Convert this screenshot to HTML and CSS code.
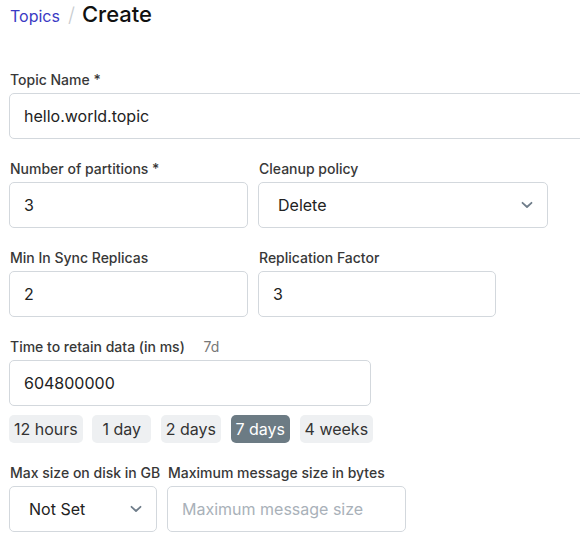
FILE: index.html
```
<!DOCTYPE html>
<html>
<head>
<meta charset="utf-8">
<link rel="stylesheet" href="styles.css">
</head>
<body>
<div class="page">
  <nav class="crumbs">
    <a class="crumb-link" href="#">Topics</a>
    <span class="crumb-sep">/</span>
    <h1 class="crumb-title">Create</h1>
  </nav>
  <form class="form">
    <div class="field">
      <label class="label">Topic Name *</label>
      <input class="input input-wide" type="text" value="hello.world.topic">
    </div>
    <div class="row">
      <div class="field">
        <label class="label">Number of partitions *</label>
        <input class="input w239" type="text" value="3">
      </div>
      <div class="field">
        <label class="label">Cleanup policy</label>
        <div class="select w290">
          <span>Delete</span>
          <svg class="chev" width="12" height="8" viewBox="0 0 12 8"><path d="M1.5 1.8 L6 6 L10.5 1.8" fill="none" stroke="#6f7d8a" stroke-width="1.8" stroke-linecap="round" stroke-linejoin="round"/></svg>
        </div>
      </div>
    </div>
    <div class="row">
      <div class="field">
        <label class="label">Min In Sync Replicas</label>
        <input class="input w239" type="text" value="2">
      </div>
      <div class="field">
        <label class="label">Replication Factor</label>
        <input class="input w238" type="text" value="3">
      </div>
    </div>
    <div class="field">
      <label class="label">Time to retain data (in ms) <span class="hint">7d</span></label>
      <input class="input w362" type="text" value="604800000">
      <div class="presets">
        <button type="button" class="preset">12 hours</button>
        <button type="button" class="preset">1 day</button>
        <button type="button" class="preset">2 days</button>
        <button type="button" class="preset active">7 days</button>
        <button type="button" class="preset">4 weeks</button>
      </div>
    </div>
    <div class="row">
      <div class="field fixed w148">
        <label class="label">Max size on disk in GB</label>
        <div class="select w148">
          <span>Not Set</span>
          <svg class="chev" width="12" height="8" viewBox="0 0 12 8"><path d="M1.5 1.8 L6 6 L10.5 1.8" fill="none" stroke="#6f7d8a" stroke-width="1.8" stroke-linecap="round" stroke-linejoin="round"/></svg>
        </div>
      </div>
      <div class="field">
        <label class="label">Maximum message size in bytes</label>
        <input class="input w239" type="text" placeholder="Maximum message size">
      </div>
    </div>
  </form>
</div>
</body>
</html>
```
FILE: styles.css
```
html, body {
  margin: 0;
  padding: 0;
  background: #fff;
  overflow: hidden;
}
body {
  font-family: Inter, "Noto Sans", sans-serif;
  color: #222;
}
.page {
  padding: 0 0 0 9px;
  overflow: hidden;
}
.crumbs {
  display: flex;
  align-items: baseline;
  height: 30px;
  padding-top: 1px;
}
.crumb-link {
  font-size: 16px;
  color: #3a3ac4;
  text-decoration: none;
  margin-left: 1px;
}
.crumb-sep {
  font-size: 20px;
  color: #c8ccd0;
  margin: 0 7px 0 8px;
  font-weight: 300;
}
.crumb-title {
  margin: 0;
  font-size: 22px;
  font-weight: 500;
  color: #111;
}
.form {
  display: flex;
  flex-direction: column;
  gap: 20px;
  margin-top: 39px;
}
.row {
  display: flex;
  gap: 10px;
}
.field {
  display: flex;
  flex-direction: column;
}
.field.fixed {
  flex: none;
}
.label {
  font-size: 14px;
  line-height: 20px;
  font-weight: 500;
  color: #383838;
  margin: 0 0 3px 1px;
  white-space: nowrap;
}
.hint {
  font-weight: 400;
  color: #777;
  margin-left: 15px;
}
.input, .select {
  box-sizing: border-box;
  height: 46px;
  border: 1px solid #d3d8dd;
  border-radius: 5px;
  font-family: Inter, "Noto Sans", sans-serif;
  font-size: 16px;
  color: #222;
  background: #fff;
  outline: none;
}
.input {
  padding: 0 14px;
}
.input::placeholder {
  color: #a9b1b9;
}
.input-wide {
  width: 640px;
}
.select {
  display: flex;
  align-items: center;
  justify-content: space-between;
  padding: 0 14px 0 19px;
}
.w239 { width: 239px; }
.w238 { width: 238px; }
.w290 { width: 290px; }
.w362 { width: 362px; }
.w148 { width: 148px; }
.presets {
  display: flex;
  gap: 9.5px;
  margin-top: 9px;
}
.preset {
  height: 28px;
  min-width: 59px;
  padding: 0 5px;
  border: none;
  border-radius: 5px;
  background: #eef0f2;
  font-family: Inter, "Noto Sans", sans-serif;
  font-size: 16px;
  color: #333;
}
.preset.active {
  background: #6c7b84;
  color: #fff;
}
```
